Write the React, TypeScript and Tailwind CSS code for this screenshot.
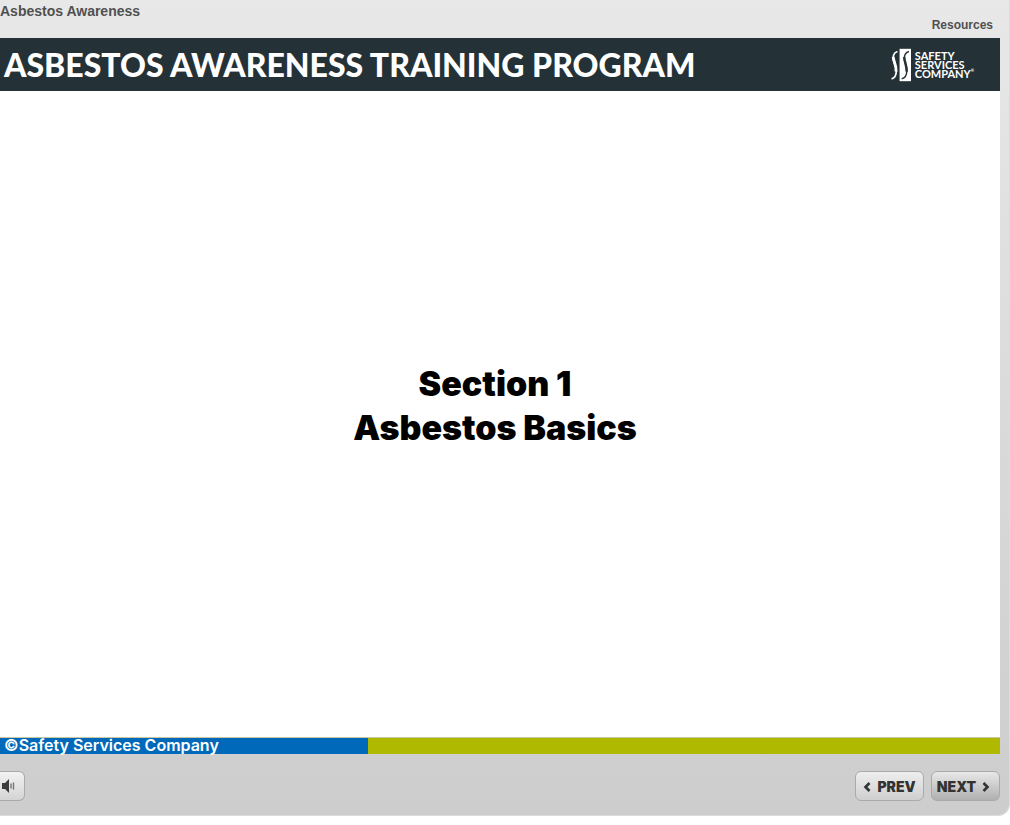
import { useState } from "react";

function BrandLogo() {
  return (
    <svg viewBox="0 0 21 36" className="h-9 w-5 shrink-0" fill="none" aria-hidden="true">
      <path
        d="M6.800 3.800C2.500 5 1.600 9.500 2.800 13.500C4 17.500 5.600 20 5.600 24C5.600 28.500 4 31.500 0.600 32.600"
        stroke="#fff"
        strokeWidth="1.800"
      />
      <path d="M2.300 9.500C2.800 15 6 18.500 5.300 25" stroke="#fff" strokeWidth="3" />
      <path d="M9 1H21V35H9Z" fill="#fff" />
      <path
        d="M18.800 3.800C14.500 5 13.600 9.500 14.200 13.500C15 17.500 16.600 20 16.600 24C16.600 28.500 15 31.500 11.200 32.600"
        stroke="#243238"
        strokeWidth="1.500"
      />
      <path d="M13.900 9.500C14 15 16.800 18.500 16.400 25" stroke="#243238" strokeWidth="2.600" />
    </svg>
  );
}

function Speaker({ muted }: { muted: boolean }) {
  return (
    <svg viewBox="0 0 14 14" className="h-3.5 w-3.5" aria-hidden="true">
      <path d="M1 4H4L8 0V14L4 10H1Z" fill="#3b3b3b" />
      {!muted && (
        <path d="M10 4.500V9.500M12.500 3.500V10.500" stroke="#777" strokeWidth="1.400" />
      )}
    </svg>
  );
}

function Chevron({ direction }: { direction: "left" | "right" }) {
  return (
    <svg viewBox="0 0 8 10" className="h-2.5 w-2" fill="none" aria-hidden="true">
      <path
        d={direction === "left" ? "M6.500 1L2.500 5L6.500 9" : "M1.500 1L5.500 5L1.500 9"}
        stroke="#333"
        strokeWidth="2.600"
      />
    </svg>
  );
}

export default function App() {
  const [muted, setMuted] = useState(false);

  return (
    <div className="min-h-screen flex flex-col bg-white pb-[9px] font-['Liberation_Sans',Arial,sans-serif]">
      <div className="flex grow flex-col rounded-br-xl border-r border-b border-[#dcdcdc] bg-linear-to-b from-[#e8e8e8] to-[#cdcdcd] pr-[9px]">
        <header className="flex h-[38px] justify-between pr-[7px] font-bold text-[#505050]">
          <h1 className="pt-px text-sm leading-5">Asbestos Awareness</h1>
          <a href="#resources" className="self-end pb-[5px] text-xs leading-4">
            Resources
          </a>
        </header>

        <main className="flex grow flex-col bg-white">
          <div className="flex h-[53px] items-center justify-between bg-[#243238] pr-[26px] pl-1 text-white">
            <h2 className="font-['Lato',sans-serif] text-[32px] font-black whitespace-nowrap">
              ASBESTOS AWARENESS TRAINING PROGRAM
            </h2>
            <div className="flex items-center gap-1">
              <BrandLogo />
              <p className="font-['Lato',sans-serif] text-[11px] leading-[9px] font-bold">
                SAFETY
                <br />
                SERVICES
                <br />
                COMPANY<span className="align-top text-[4px] leading-none">®</span>
              </p>
            </div>
          </div>

          <section className="flex grow flex-col items-center justify-center pr-2.5 pb-4 text-center font-['Inter',sans-serif] text-[34px] leading-11 font-black text-black">
            <p>Section 1</p>
            <p>Asbestos Basics</p>
          </section>

          <footer className="flex h-[17px] border-t border-[#c8c8a0]">
            <div className="flex w-[368px] items-center bg-[#0069ba] pb-0.5 pl-1 font-['Inter',sans-serif] text-base leading-4 font-semibold text-white">
              ©Safety Services Company
            </div>
            <div className="grow bg-[#aeb900]" />
          </footer>
        </main>

        <nav className="flex h-[61px] items-start justify-between pt-[17px]" aria-label="Player controls">
          <button
            type="button"
            aria-label={muted ? "Unmute" : "Mute"}
            onClick={() => setMuted(!muted)}
            className="flex h-[30px] w-[25px] items-center rounded-r-md border border-l-0 border-[#aaa] bg-linear-to-b from-[#f2f2f2] to-[#d4d4d4] pl-px"
          >
            <Speaker muted={muted} />
          </button>
          <div className="flex gap-[7px] font-['Inter',sans-serif] text-sm font-black text-[#333]">
            <button
              type="button"
              className="flex h-[30px] w-[69px] items-center justify-center gap-1.5 rounded-md border border-[#aaa] bg-linear-to-b from-[#eee] to-[#cfcfcf] pt-px"
            >
              <Chevron direction="left" />
              PREV
            </button>
            <button
              type="button"
              className="flex h-[30px] w-[69px] items-center justify-center gap-1.5 rounded-md border border-[#aaa] bg-linear-to-b from-[#e8e8e8] to-[#b0b0b0] pt-px pr-1"
            >
              NEXT
              <Chevron direction="right" />
            </button>
          </div>
        </nav>
      </div>
    </div>
  );
}
